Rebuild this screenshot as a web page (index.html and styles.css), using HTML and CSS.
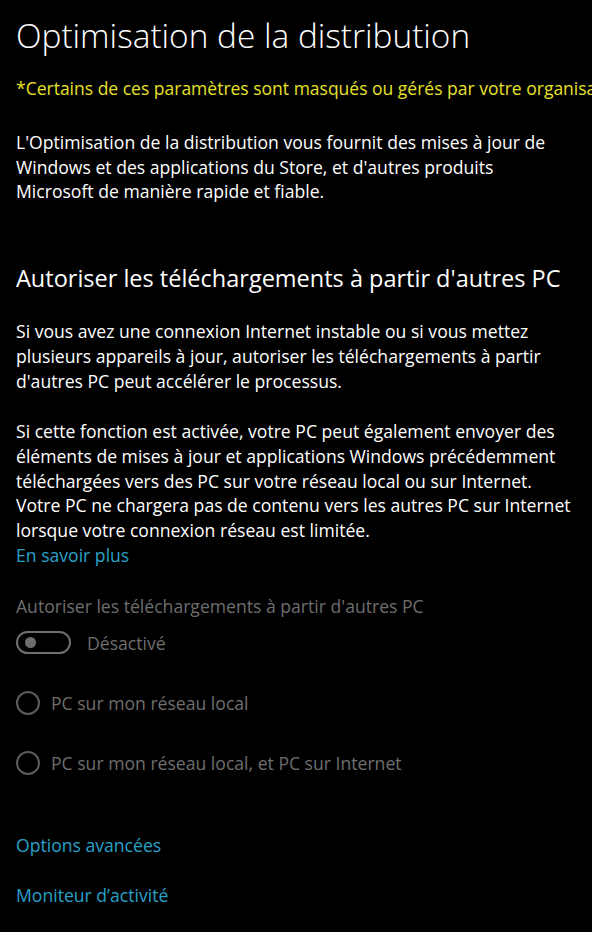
FILE: index.html
```html
<!DOCTYPE html>
<html lang="fr">
<head>
    <meta charset="UTF-8">
    <meta name="viewport" content="width=device-width, initial-scale=1.0">
    <title>Optimisation de la distribution</title>
    <link rel="stylesheet" href="styles.css">
</head>
<body>
    <div class="page">
        <h1 class="title">Optimisation de la distribution</h1>
        <p class="managed">*Certains de ces paramètres sont masqués ou gérés par votre organisation.</p>

        <p class="text intro">L'Optimisation de la distribution vous fournit des mises à jour de<br>Windows et des applications du Store, et d'autres produits<br>Microsoft de manière rapide et fiable.</p>

        <h2 class="subtitle">Autoriser les téléchargements à partir d'autres PC</h2>

        <p class="text">Si vous avez une connexion Internet instable ou si vous mettez<br>plusieurs appareils à jour, autoriser les téléchargements à partir<br>d'autres PC peut accélérer le processus.</p>
        <p class="text gap">Si cette fonction est activée, votre PC peut également envoyer des<br>éléments de mises à jour et applications Windows précédemment<br>téléchargées vers des PC sur votre réseau local ou sur Internet.<br>Votre PC ne chargera pas de contenu vers les autres PC sur Internet<br>lorsque votre connexion réseau est limitée.</p>
        <a href="#" class="link">En savoir plus</a>

        <div class="setting">
            <div class="label">Autoriser les téléchargements à partir d'autres PC</div>
            <div class="toggle-row">
                <span class="toggle"><span class="knob"></span></span>
                <span class="state">Désactivé</span>
            </div>
            <div class="radio-row">
                <span class="radio"></span>
                <span class="state">PC sur mon réseau local</span>
            </div>
            <div class="radio-row">
                <span class="radio"></span>
                <span class="state">PC sur mon réseau local, et PC sur Internet</span>
            </div>
        </div>

        <div class="links">
            <a href="#" class="link">Options avancées</a>
            <a href="#" class="link">Moniteur d’activité</a>
        </div>
    </div>
</body>
</html>
```

FILE: styles.css
```css
body {
    margin: 0;
    background-color: #000;
    color: #fff;
    font-family: "Segoe UI", "Open Sans", sans-serif;
    overflow: hidden;
}
.page {
    padding: 0 0 0 16px;
    width: 592px;
    box-sizing: border-box;
}
.title {
    margin: 14px 0 0;
    font-size: 33.4px;
    font-weight: 300;
    line-height: 42px;
}
.managed {
    margin: 20px 0 0;
    color: #e8e02a;
    font-size: 17.5px;
    line-height: 24px;
    white-space: nowrap;
}
.text {
    margin: 0;
    font-size: 17.6px;
    line-height: 24.7px;
    white-space: nowrap;
}
.intro {margin-top: 30px;}
.gap {margin-top: 26px;}
.subtitle {
    margin: 59px 0 26px;
    font-size: 23.5px;
    font-weight: 400;
    line-height: 30px;
}
.link {
    display: block;
    color: #2aa0c8;
    font-size: 17.6px;
    line-height: 25px;
    text-decoration: none;
}
.setting {
    margin-top: 26px;
    color: #6e6e6e;
    font-size: 17.6px;
}
.label {line-height: 24px;}
.toggle-row {
    display: flex;
    align-items: center;
    gap: 16px;
    margin-top: 13px;
}
.toggle {
    display: flex;
    align-items: center;
    width: 55px;
    height: 23px;
    border: 2px solid #6e6e6e;
    border-radius: 14px;
    box-sizing: border-box;
    padding-left: 7px;
}
.knob {
    width: 11px;
    height: 11px;
    border-radius: 50%;
    background-color: #6e6e6e;
}
.radio-row {
    display: flex;
    align-items: center;
    gap: 11px;
    margin-top: 36px;
}
.radio {
    width: 24px;
    height: 24px;
    border: 2px solid #5c5c5c;
    border-radius: 50%;
    box-sizing: border-box;
}
.links {
    display: flex;
    flex-direction: column;
    gap: 25px;
    margin-top: 58px;
}
```
